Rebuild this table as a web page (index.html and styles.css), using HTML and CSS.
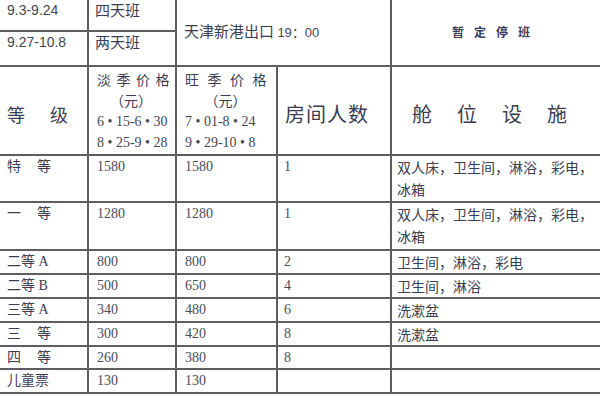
FILE: index.html
```html
<!DOCTYPE html>
<html lang="zh-CN">
<head>
<meta charset="utf-8">
<title>船票价格表</title>
<link rel="stylesheet" href="styles.css">
</head>
<body>
<table class="fares">
  <colgroup>
    <col class="c1"><col class="c2"><col class="c3"><col class="c4"><col class="c5">
  </colgroup>
  <tr class="r-top1">
    <td class="date">9.3-9.24</td>
    <td class="plan">四天班</td>
    <td class="route" colspan="2" rowspan="2">天津新港出口 <span class="time">19：00</span></td>
    <td class="stop" rowspan="2">暂定停班</td>
  </tr>
  <tr class="r-top2">
    <td class="date">9.27-10.8</td>
    <td class="plan">两天班</td>
  </tr>
  <tr class="r-head">
    <td class="h-grade"><span class="sp-grade">等</span>级</td>
    <td class="h-price">
      <div class="h-title sp-low">淡季价格</div>
      <div class="h-unit">（元）</div>
      <div class="h-num">6 • 15-6 • 30</div>
      <div class="h-num">8 • 25-9 • 28</div>
    </td>
    <td class="h-price">
      <div class="h-title sp-high">旺季价格</div>
      <div class="h-unit">（元）</div>
      <div class="h-num">7 • 01-8 • 24</div>
      <div class="h-num">9 • 29-10 • 8</div>
    </td>
    <td class="h-room">房间人数</td>
    <td class="h-fac">舱位设施</td>
  </tr>
  <tr class="r-tall">
    <td class="grade"><span class="sp">特</span>等</td>
    <td class="num">1580</td><td class="num">1580</td><td class="num n4">1</td>
    <td class="fac">双人床，卫生间，淋浴，彩电，<br>冰箱</td>
  </tr>
  <tr class="r-tall2">
    <td class="grade"><span class="sp">一</span>等</td>
    <td class="num">1280</td><td class="num">1280</td><td class="num n4">1</td>
    <td class="fac">双人床，卫生间，淋浴，彩电，<br>冰箱</td>
  </tr>
  <tr class="r-a">
    <td class="grade">二等 A</td>
    <td class="num">800</td><td class="num">800</td><td class="num n4">2</td>
    <td class="fac">卫生间，淋浴，彩电</td>
  </tr>
  <tr class="r-b">
    <td class="grade">二等 B</td>
    <td class="num">500</td><td class="num">650</td><td class="num n4">4</td>
    <td class="fac">卫生间，淋浴</td>
  </tr>
  <tr class="r-b">
    <td class="grade">三等 A</td>
    <td class="num">340</td><td class="num">480</td><td class="num n4">6</td>
    <td class="fac">洗漱盆</td>
  </tr>
  <tr class="r-a">
    <td class="grade"><span class="sp">三</span>等</td>
    <td class="num">300</td><td class="num">420</td><td class="num n4">8</td>
    <td class="fac">洗漱盆</td>
  </tr>
  <tr class="r-a">
    <td class="grade"><span class="sp">四</span>等</td>
    <td class="num">260</td><td class="num">380</td><td class="num n4">8</td>
    <td class="fac"></td>
  </tr>
  <tr class="r-b">
    <td class="grade">儿童票</td>
    <td class="num">130</td><td class="num">130</td><td class="num n4"></td>
    <td class="fac"></td>
  </tr>
</table>
</body>
</html>
```

FILE: styles.css
```css
html, body {
  margin: 0;
  padding: 0;
  background: #ffffff;
  overflow: hidden;
}

.fares {
  border-collapse: collapse;
  table-layout: fixed;
  width: 600px;
  color: #3b3d52;
  font-family: "Liberation Serif", "Noto Sans CJK SC", serif;
  font-size: 14px;
}

.c1 { width: 88px; }
.c2 { width: 88px; }
.c3 { width: 101px; }
.c4 { width: 114px; }
.c5 { width: 209px; }

.fares td {
  border: 2px solid #5e5e62;
  padding: 1px 0 0 8px;
  vertical-align: top;
  line-height: 20px;
  overflow: hidden;
  white-space: nowrap;
}

.fares tr:first-child td { border-top: none; }
.fares td:first-child { border-left: none; padding-left: 7px; }
.fares td:last-child { border-right: none; }

/* top block */
.r-top1 { height: 31px; }
.r-top2 { height: 35px; }

.date {
  font-family: "Liberation Sans", sans-serif;
  font-size: 14px;
  color: #44464f;
}
.fares td.date { padding-top: 0; }

.plan {
  font-family: "Noto Sans CJK SC", sans-serif;
  font-size: 15px;
}
.fares td.plan { padding-top: 0; padding-left: 6px; }

.route {
  font-family: "Noto Sans CJK SC", sans-serif;
  font-size: 15px;
}
.fares td.route { vertical-align: middle; padding: 0 0 2px 7px; }
.time {
  font-family: "Liberation Sans", sans-serif;
  font-size: 13px;
  color: #44464f;
}

.stop {
  font-family: "Noto Sans CJK SC", sans-serif;
  font-size: 12px;
  font-weight: bold;
  letter-spacing: 10px;
  text-align: center;
  color: #3a3d5c;
}
.fares td.stop { vertical-align: middle; padding: 0 0 2px 0; }

/* header row */
.r-head { height: 89px; }

.h-grade {
  font-family: "Noto Sans CJK SC", sans-serif;
  font-size: 18px;
}
.fares td.h-grade { vertical-align: middle; padding-top: 6px; }
.sp-grade { margin-right: 25px; }

.fares td.h-price { padding-top: 2px; line-height: 21px; }
.h-title {
  font-family: "Noto Sans CJK SC", sans-serif;
  font-size: 14px;
}
.sp-low { letter-spacing: 5.5px; }
.sp-high { letter-spacing: 8.5px; }
.h-unit {
  font-family: "Noto Sans CJK SC", sans-serif;
  text-align: center;
  padding-right: 10px;
}
.h-num { font-size: 14px; color: #44464f; }

.h-room {
  font-family: "Noto Sans CJK SC", sans-serif;
  font-size: 20px;
  letter-spacing: 1px;
}
.fares td.h-room { vertical-align: middle; padding: 6px 0 0 7px; }

.h-fac {
  font-family: "Noto Sans CJK SC", sans-serif;
  font-size: 20px;
  letter-spacing: 25px;
}
.fares td.h-fac { vertical-align: middle; padding: 6px 0 0 20px; }

/* data rows */
.r-tall { height: 47px; }
.r-tall2 { height: 48px; }
.r-a { height: 23px; }
.r-b { height: 24px; }

.grade .sp { margin-right: 16px; }

.num { color: #4a4c58; }
.fares td.n4 { padding-left: 6px; }

.fac {
  font-family: "Noto Sans CJK SC", sans-serif;
  font-size: 14px;
}
.fares td.fac { padding: 0 0 0 5px; line-height: 22px; }
```
